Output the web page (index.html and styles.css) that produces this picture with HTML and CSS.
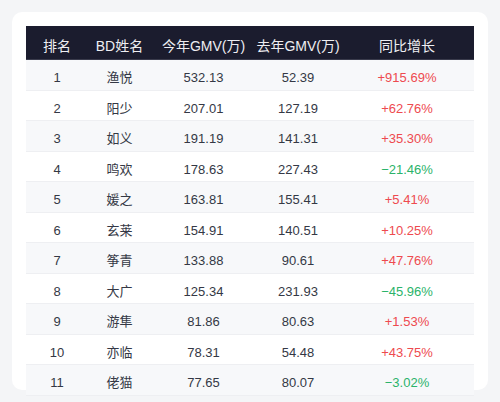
FILE: index.html
```html
<!DOCTYPE html>
<html lang="zh-CN">
<head>
    <meta charset="UTF-8">
    <meta name="viewport" content="width=device-width, initial-scale=1.0">
    <title>BD GMV 排名</title>
    <link rel="stylesheet" href="styles.css">
</head>
<body>

    <div class="card">
        <table class="rank-table">
            <colgroup>
                <col class="col-rank">
                <col class="col-name">
                <col class="col-gmv">
                <col class="col-last">
                <col class="col-yoy">
            </colgroup>
            <thead>
                <tr>
                    <th>排名</th>
                    <th>BD姓名</th>
                    <th>今年GMV(万)</th>
                    <th>去年GMV(万)</th>
                    <th>同比增长</th>
                </tr>
            </thead>
            <tbody>
                <tr>
                    <td>1</td>
                    <td>渔悦</td>
                    <td>532.13</td>
                    <td>52.39</td>
                    <td class="up">+915.69%</td>
                </tr>
                <tr>
                    <td>2</td>
                    <td>阳少</td>
                    <td>207.01</td>
                    <td>127.19</td>
                    <td class="up">+62.76%</td>
                </tr>
                <tr>
                    <td>3</td>
                    <td>如义</td>
                    <td>191.19</td>
                    <td>141.31</td>
                    <td class="up">+35.30%</td>
                </tr>
                <tr>
                    <td>4</td>
                    <td>鸣欢</td>
                    <td>178.63</td>
                    <td>227.43</td>
                    <td class="down">−21.46%</td>
                </tr>
                <tr>
                    <td>5</td>
                    <td>媛之</td>
                    <td>163.81</td>
                    <td>155.41</td>
                    <td class="up">+5.41%</td>
                </tr>
                <tr>
                    <td>6</td>
                    <td>玄莱</td>
                    <td>154.91</td>
                    <td>140.51</td>
                    <td class="up">+10.25%</td>
                </tr>
                <tr>
                    <td>7</td>
                    <td>筝青</td>
                    <td>133.88</td>
                    <td>90.61</td>
                    <td class="up">+47.76%</td>
                </tr>
                <tr>
                    <td>8</td>
                    <td>大广</td>
                    <td>125.34</td>
                    <td>231.93</td>
                    <td class="down">−45.96%</td>
                </tr>
                <tr>
                    <td>9</td>
                    <td>游隼</td>
                    <td>81.86</td>
                    <td>80.63</td>
                    <td class="up">+1.53%</td>
                </tr>
                <tr>
                    <td>10</td>
                    <td>亦临</td>
                    <td>78.31</td>
                    <td>54.48</td>
                    <td class="up">+43.75%</td>
                </tr>
                <tr>
                    <td>11</td>
                    <td>佬猫</td>
                    <td>77.65</td>
                    <td>80.07</td>
                    <td class="down">−3.02%</td>
                </tr>
            </tbody>
        </table>
    </div>

</body>
</html>
```

FILE: styles.css
```css
* {
    margin: 0;
    padding: 0;
    box-sizing: border-box;
    font-family: "Liberation Sans", "Noto Sans CJK SC", sans-serif;
}

body {
    background-color: #f4f5f7;
    padding: 12px;
    height: 402px;
    overflow: hidden;
}

.card {
    background: #ffffff;
    border-radius: 10px;
    padding: 14px;
    height: 378px;
}

.rank-table {
    width: 100%;
    table-layout: fixed;
    border-collapse: collapse;
}

.col-rank { width: 62px; }
.col-name { width: 63px; }
.col-gmv { width: 105px; }
.col-last { width: 84px; }
.col-yoy { width: 134px; }

.rank-table th {
    background: #1b1c2e;
    color: #eeeef2;
    font-size: 14px;
    font-weight: normal;
    line-height: 18px;
    padding: 11px 0 4px;
    text-align: center;
    border-bottom: 1px solid #3a3b4c;
}

.rank-table td {
    font-size: 13px;
    line-height: 18px;
    height: 30.5px;
    padding: 9px 0 2.5px;
    text-align: center;
    color: #343845;
    border-bottom: 1px solid #eeeff2;
}

.rank-table tbody tr:nth-child(odd) {
    background: #f7f8fa;
}

.rank-table tbody tr:nth-child(even) {
    background: #ffffff;
}

.up {
    color: #ee4a4f !important;
}

.down {
    color: #2bb36a !important;
}
```
